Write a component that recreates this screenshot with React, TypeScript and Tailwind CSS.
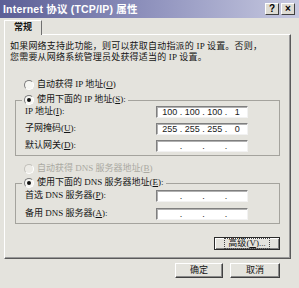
import { Fragment, type ReactNode } from 'react';

function Radio({ checked, disabled }: { checked?: boolean; disabled?: boolean }) {
  return (
    <span
      className={`inline-flex w-[10px] h-[10px] shrink-0 rounded-full border items-center justify-center ${
        disabled
          ? 'border-t-[#c2c1bb] border-l-[#c2c1bb] border-b-white border-r-white bg-[#ecebe6]'
          : 'border-t-[#7c7c7c] border-l-[#7c7c7c] border-b-white border-r-white bg-[#f6f6f2]'
      }`}
    >
      {checked && <span className="w-[4px] h-[4px] rounded-full bg-[#111]" />}
    </span>
  );
}

function Key({ k }: { k: string }) {
  return (
    <>
      (<span className="underline underline-offset-1">{k}</span>)
    </>
  );
}

function IpBox({ values }: { values?: string[] }) {
  const v = values ?? ['', '', '', ''];
  return (
    <div className="w-[92px] h-[12px] bg-white border border-t-[#7f7f7f] border-l-[#7f7f7f] border-r-[#f2f2f2] border-b-[#f2f2f2] shadow-[inset_1px_1px_0_#b0b0b0] flex items-center pl-[3px] font-['Liberation_Sans',sans-serif] text-[9px] leading-none text-[#1a1a1a]">
      {v.map((s, i) => (
        <Fragment key={i}>
          {i > 0 && <span className="w-[3px] text-center">.</span>}
          <span className="w-[20px] text-center">{s}</span>
        </Fragment>
      ))}
    </div>
  );
}

function Row({ label, values }: { label: ReactNode; values?: string[] }) {
  return (
    <div className="flex items-center h-[12px] pl-[9px] pr-[31px]">
      <span className="flex-1">{label}</span>
      <IpBox values={values} />
    </div>
  );
}

function Btn({ children, className, focus }: { children: ReactNode; className: string; focus?: boolean }) {
  return (
    <div
      className={`${className} flex items-center justify-center bg-[#e4e3dd] ${
        focus
          ? 'border border-[#2a2a2a] shadow-[inset_1px_1px_0_#fff,inset_-1px_-1px_0_#808080]'
          : 'border border-t-white border-l-white border-r-[#404040] border-b-[#404040] shadow-[inset_-1px_-1px_0_#8a8a8a]'
      }`}
    >
      {focus ? (
        <span className="px-[3px] leading-[9px] border border-dotted border-[#444]">{children}</span>
      ) : (
        children
      )}
    </div>
  );
}

function TitleBtn({ children }: { children: ReactNode }) {
  return (
    <div className="w-[14px] h-[12px] flex items-center justify-center bg-[#dedcd4] border border-t-white border-l-white border-r-[#404040] border-b-[#404040] font-['Liberation_Sans',sans-serif] font-bold text-[10px] leading-none text-black">
      {children}
    </div>
  );
}

export default function App() {
  return (
    <div className="w-[299px] h-[288px] bg-[#e4e3dd] flex flex-col font-['Liberation_Serif','Noto_Sans_CJK_SC',serif] text-[9px] text-[#141414] overflow-hidden">
      <div className="h-[18px] shrink-0 flex items-center justify-between pl-[3px] pr-[4px] bg-linear-to-r from-[#5c5f96] via-[#8f92bd] to-[#c7c9e0]">
        <span className="text-white font-bold text-[10.5px] leading-none tracking-[0.2px] font-['Liberation_Sans','Noto_Sans_CJK_SC',sans-serif]">
          Internet 协议 (TCP/IP) 属性
        </span>
        <div className="flex gap-[2px]">
          <TitleBtn>?</TitleBtn>
          <TitleBtn>×</TitleBtn>
        </div>
      </div>

      <div className="pt-[2px] pl-[4px] flex">
        <div className="relative z-10 -mb-px w-[38px] h-[15px] border-t border-l border-r border-t-white border-l-white border-r-[#707070] bg-[#e4e3dd] flex items-center justify-center font-bold">
          常规
        </div>
      </div>

      <div className="ml-[4px] w-[287px] h-[225px] shrink-0 border border-t-white border-l-white border-r-[#5a5a5a] border-b-[#5a5a5a] shadow-[inset_-1px_-1px_0_#9a9a9a] flex flex-col">
        <p className="mt-[6px] pl-[5px] leading-[11px] whitespace-nowrap tracking-[0.2px]">
          如果网络支持此功能，则可以获取自动指派的 IP 设置。否则，
          <br />
          您需要从网络系统管理员处获得适当的 IP 设置。
        </p>

        <div className="mt-[16px] ml-[19px] h-[12px] flex items-center gap-[3px]">
          <Radio />
          <span>
            自动获得 IP 地址<Key k="O" />
          </span>
        </div>

        <fieldset className="mt-[3px] ml-[10px] w-[265px] border border-[#a4a39d] pb-[3px] flex flex-col gap-[5px]">
          <legend className="ml-[6px] pl-[2px] pr-[2px] h-[12px] bg-[#e4e3dd] flex items-center gap-[3px]">
            <Radio checked />
            <span>
              使用下面的 IP 地址<Key k="S" />:
            </span>
          </legend>
          <Row label={<>IP 地址<Key k="I" />:</>} values={['100', '100', '100', '1']} />
          <Row label={<>子网掩码<Key k="U" />:</>} values={['255', '255', '255', '0']} />
          <Row label={<>默认网关<Key k="D" />:</>} />
        </fieldset>

        <div className="mt-[7px] ml-[19px] h-[12px] flex items-center gap-[3px] text-[#aaa9a2]">
          <Radio disabled />
          <span>
            自动获得 DNS 服务器地址<Key k="B" />
          </span>
        </div>

        <fieldset className="mt-[2px] ml-[10px] w-[265px] border border-[#a4a39d] pt-[1px] pb-[3px] flex flex-col gap-[6px]">
          <legend className="ml-[6px] pl-[2px] pr-[2px] h-[12px] bg-[#e4e3dd] flex items-center gap-[3px]">
            <Radio checked />
            <span>
              使用下面的 DNS 服务器地址<Key k="E" />:
            </span>
          </legend>
          <Row label={<>首选 DNS 服务器<Key k="P" />:</>} />
          <Row label={<>备用 DNS 服务器<Key k="A" />:</>} />
        </fieldset>

        <div className="mt-[13px] flex justify-end pr-[10px]">
          <Btn className="w-[66px] h-[13px]" focus>
            高级<Key k="V" />...
          </Btn>
        </div>
      </div>

      <div className="mt-[4px] flex justify-end gap-[7px] pr-[19px]">
        <Btn className="w-[48px] h-[15px]">确定</Btn>
        <Btn className="w-[50px] h-[15px]">取消</Btn>
      </div>
    </div>
  );
}
